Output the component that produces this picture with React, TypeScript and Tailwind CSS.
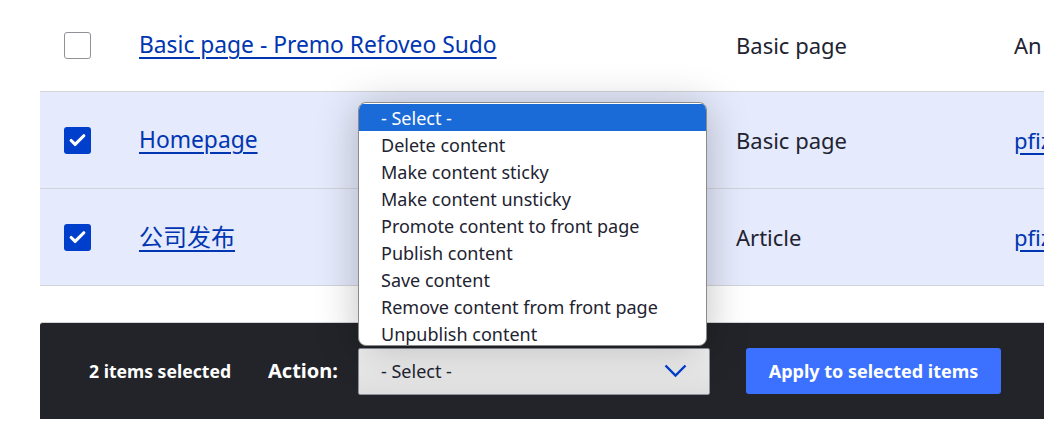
import { Check } from "lucide-react";

const font = { fontFamily: '"Noto Sans", "Noto Sans CJK SC", sans-serif' };

type Row = { title: string; type: string; author: string; checked: boolean; cjk?: boolean };

const rows: Row[] = [
  { title: "Basic page - Premo Refoveo Sudo", type: "Basic page", author: "An", checked: false },
  { title: "Homepage", type: "Basic page", author: "pfiz", checked: true },
  { title: "公司发布", type: "Article", author: "pfiz", checked: true, cjk: true },
];

const options = [
  "- Select -",
  "Delete content",
  "Make content sticky",
  "Make content unsticky",
  "Promote content to front page",
  "Publish content",
  "Save content",
  "Remove content from front page",
  "Unpublish content",
];

const CheckBox = ({ checked }: { checked: boolean }) =>
  checked ? (
    <div className="w-[27px] h-[27px] rounded-[3px] bg-[#003ecc] flex items-center justify-center">
      <Check className="w-[19px] h-[19px] text-white" strokeWidth={4} />
    </div>
  ) : (
    <div className="w-[27px] h-[27px] rounded-[3px] border border-[#919297] bg-white" />
  );

const TableRow = ({ row, index }: { row: Row; index: number }) => (
  <div
    className={`flex items-center border-b border-[#d3d4d9] ${index === 0 ? "h-[92px] bg-white" : "h-[97px] bg-[#e5eafc]"}`}
  >
    <div className="w-[99px] shrink-0 pl-6">
      <CheckBox checked={row.checked} />
    </div>
    <div className="w-[597px] shrink-0">
      <a
        href="#"
        className={`${row.cjk ? "text-[24px]" : "text-[22.8px]"} text-[#0036b1] underline underline-offset-[4px] decoration-[2px]`}
      >
        {row.title}
      </a>
    </div>
    <div className="w-[278px] shrink-0 text-[22px] text-[#222330]">{row.type}</div>
    <div className="shrink-0 text-[22px] whitespace-nowrap">
      {row.checked ? (
        <a href="#" className="text-[#0036b1] underline underline-offset-[4px] decoration-[2px]">{row.author}</a>
      ) : (
        <span className="text-[#222330]">{row.author}</span>
      )}
    </div>
  </div>
);

export default function App() {
  return (
    <div className="w-[1044px] h-[435px] overflow-hidden bg-white relative" style={font}>
      <div className="ml-10 w-[1100px]">
        {rows.map((row, i) => (
          <TableRow key={i} row={row} index={i} />
        ))}
      </div>

      {/* sticky bulk action bar */}
      <div className="ml-10 mt-[36px] w-[1100px] h-[97px] bg-[#232429] rounded-tl-[3px] border-t border-[#d3d4d9] flex items-center">
        <span className="ml-[49px] text-[17.6px] font-bold text-white">2 items selected</span>
        <span className="ml-[37px] text-[20px] font-bold text-white">Action:</span>
        <div className="ml-[20px] w-[352px] h-[47px] rounded-[2px] border border-[#8e929c] bg-gradient-to-b from-[#f4f4f4] to-[#dedede] flex items-center justify-between pl-[22px] pr-[22px]">
          <span className="text-[18px] text-[#222330]">- Select -</span>
          <svg width="23" height="14" viewBox="0 0 23 14" fill="none">
            <polyline points="1.5,1.5 11.5,11.5 21.5,1.5" stroke="#003ecc" strokeWidth="2.4" />
          </svg>
        </div>
        <button className="ml-[36px] w-[255px] h-[46px] rounded-[3px] bg-[#3b71fe] text-white text-[18px] font-bold">
          Apply to selected items
        </button>
      </div>

      {/* open select list */}
      <div className="absolute left-[358px] top-[102px] w-[349px] h-[244px] bg-white border border-[#8b8b8b] rounded-[8px] overflow-hidden shadow-[0_4px_40px_rgba(0,0,0,0.25)] pt-[1px]">
        {options.map((o, i) => (
          <div
            key={o}
            className={`h-[27px] pl-[22px] flex items-center text-[18px] leading-none ${i === 0 ? "bg-[#1a6ad8] text-white" : "text-[#222330]"}`}
          >
            {o}
          </div>
        ))}
      </div>
    </div>
  );
}
